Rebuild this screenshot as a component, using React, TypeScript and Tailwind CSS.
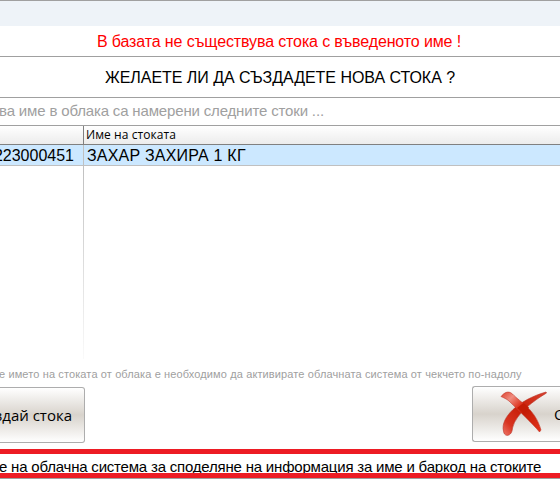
function CrossIcon() {
  return (
    <svg width="48" height="46" viewBox="0 0 48 46" className="shrink-0">
      <defs>
        <linearGradient id="down" x1="0" y1="0" x2="1" y2="1">
          <stop offset="0" stopColor="#dd3f2b" />
          <stop offset="0.2" stopColor="#f08d80" />
          <stop offset="0.42" stopColor="#dc2c16" />
          <stop offset="0.55" stopColor="#c41c05" />
          <stop offset="1" stopColor="#e3341c" />
        </linearGradient>
        <linearGradient id="up" x1="1" y1="0" x2="0" y2="1">
          <stop offset="0" stopColor="#d9432f" />
          <stop offset="0.5" stopColor="#c81e08" />
          <stop offset="0.8" stopColor="#d83420" />
          <stop offset="1" stopColor="#ef7668" />
        </linearGradient>
      </defs>
      <path d="M46.500 2C35 9 16 22 12.500 37C12 46 4 46.500 3.500 40C0 27 18 9 46 1Z" fill="url(#up)" stroke="#b83226" strokeWidth="0.6" />
      <path d="M1 5.500C4 2 8 -1 12.500 3C21 12 35 18 41 39L39.500 41C32 32 20 21 9 10C6 7.500 4 7 1 5.500Z" fill="url(#down)" stroke="#c23b2e" strokeWidth="0.6" />
      <path d="M23.500 12L29 16.500L24 22.500L17 17Z" fill="#c41c05" />
    </svg>
  );
}

export default function App() {
  return (
    <div className="flex h-[479px] w-[560px] flex-col overflow-hidden whitespace-nowrap bg-white font-['Liberation_Sans',Arial,sans-serif] text-black">
      <div className="h-[26px] shrink-0 border-t border-[#a0a0a0] bg-[#eef3f8]" />
      <div className="flex h-[31px] shrink-0 border-b border-[#a0a0a0] pl-[97px] pt-[4px] text-[16px] leading-[24px] tracking-[-0.13px] text-[#ff0000]">
        <span>В базата не съществува стока с въведеното име !</span>
      </div>
      <div className="flex h-[41px] shrink-0 border-b border-[#a0a0a0] pl-[105px] pt-[9px] text-[16px] leading-[24px] tracking-[-0.04px]">
        <span>ЖЕЛАЕТЕ ЛИ ДА СЪЗДАДЕТЕ НОВА СТОКА ?</span>
      </div>
      <div className="flex h-[28px] shrink-0 border-b border-[#a0a0a0] pt-[1px] text-[15px] leading-[24px] tracking-[-0.16px] text-[#a0a0a0]">
        <span className="-ml-px">ва име в облака са намерени следните стоки ...</span>
      </div>
      <div className="flex h-[19px] shrink-0 border-b border-[#808080] bg-linear-to-b from-white to-[#ececec]">
        <div className="w-[84px] border-r border-[#808080]" />
        <div className="pl-[2px] font-['Open_Sans','Noto_Sans',sans-serif] text-[12px] leading-[18px] tracking-[0.08px]">
          <span>Име на стоката</span>
        </div>
      </div>
      <div className="flex h-[21px] shrink-0 border-b border-[#c0c0c0] bg-[#cce8ff] text-[16px] leading-[21px]">
        <div className="flex w-[84px] justify-end overflow-hidden border-r border-[#c0c0c0] pr-[9px]">
          <span>223000451</span>
        </div>
        <div className="pl-[3px] tracking-[0.2px]">
          <span>ЗАХАР ЗАХИРА 1 КГ</span>
        </div>
      </div>
      <div className="flex h-[193px] shrink-0">
        <div className="w-[83px]" />
        <div className="w-px bg-linear-to-b from-[#c0c0c0] to-[#fafafa]" />
      </div>
      <div className="flex h-[27px] shrink-0 pt-[7px] text-[11px] leading-[16px] tracking-[0.12px] text-[#a0a0a0]">
        <span className="-ml-px">е името на стоката от облака е необходимо да активирате облачната система от чекчето по-надолу</span>
      </div>
      <div className="flex h-[63px] shrink-0 justify-between font-['Open_Sans','Noto_Sans',sans-serif] text-[15px]">
        <button className="mt-px flex h-[56px] w-[85px] items-center justify-end overflow-hidden rounded-r-[3px] border border-l-0 border-[#adadad] bg-linear-to-b from-white via-[#d8d3cc] to-white pr-[12px]">
          <span>Създай стока</span>
        </button>
        <button className="flex h-[56px] w-[88px] items-center overflow-hidden rounded-l-[3px] border border-r-0 border-[#adadad] bg-linear-to-b from-white via-[#d8d3cc] to-white pl-[27px]">
          <CrossIcon />
          <span className="ml-[6px]">Отказ</span>
        </button>
      </div>
      <div className="h-[29px] shrink-0 overflow-hidden border-y-[5px] border-[#ed1c24] text-[15px] leading-[26px] tracking-[-0.2px]">
        <span className="-ml-px">е на облачна система за споделяне на информация за име и баркод на стоките</span>
      </div>
      <div className="h-px bg-[#a0a0a0]" />
    </div>
  );
}
